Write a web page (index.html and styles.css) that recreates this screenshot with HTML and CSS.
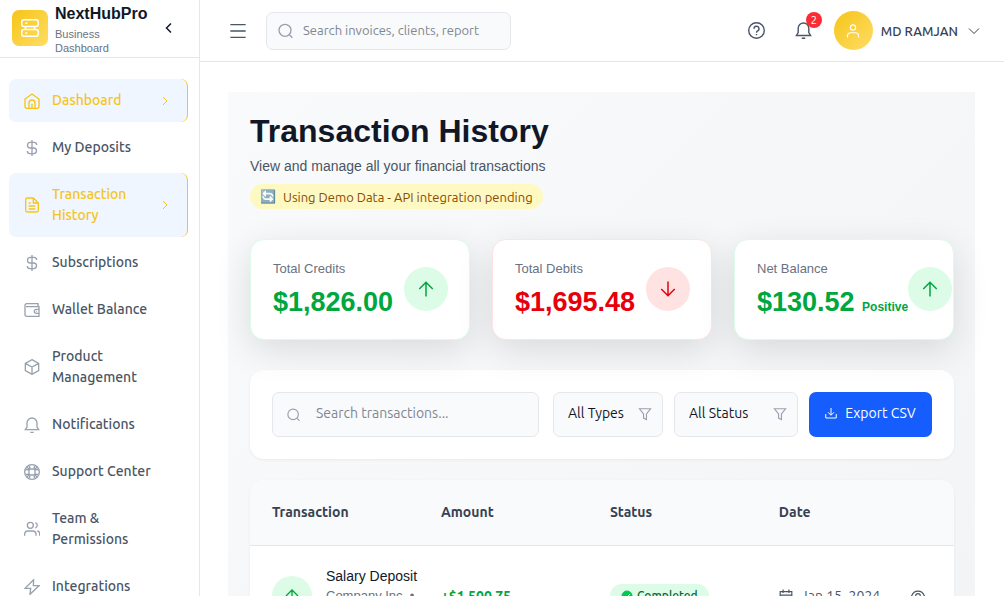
FILE: index.html
```html
<!DOCTYPE html>
<html lang="en">

<head>
    <meta charset="UTF-8">
    <meta name="viewport" content="width=device-width, initial-scale=1.0">
    <title>NextHubPro - Transaction History</title>
    <link rel="stylesheet" href="styles.css">
</head>

<body>
    <!-- Icon sprite -->
    <svg class="sprite" aria-hidden="true">
        <symbol id="i-server" viewBox="0 0 24 24"><rect x="1" y="1" width="22" height="9" rx="3"/><rect x="1" y="14" width="22" height="9" rx="3"/><path d="M5.500 5.500h3M5.500 18.500h3M18 10v4M6 10v4"/></symbol>
        <symbol id="i-left" viewBox="0 0 24 24"><path d="M16 3l-9 9 9 9"/></symbol>
        <symbol id="i-right" viewBox="0 0 24 24"><path d="M8 4l8 8-8 8"/></symbol>
        <symbol id="i-down" viewBox="0 0 24 24"><path d="M2 7l10 10L22 7"/></symbol>
        <symbol id="i-home" viewBox="0 0 24 24"><path d="M1.500 9L12 1.500 22.500 9v11a3 3 0 0 1-3 3h-15a3 3 0 0 1-3-3z"/><path d="M7.500 23v-8a4.500 4.500 0 0 1 9 0v8M12 16v7"/></symbol>
        <symbol id="i-dollar" viewBox="0 0 24 24"><path d="M12 0v24M19 7.500a4 4 0 0 0-4-4H9.500a4.200 4.200 0 0 0 0 8.500h5a4.200 4.200 0 0 1 0 8.500H9a4 4 0 0 1-4-4"/></symbol>
        <symbol id="i-file" viewBox="0 0 24 24"><path d="M14 1.500H5a2.500 2.500 0 0 0-2.500 2.500v16A2.500 2.500 0 0 0 5 22.500h14a2.500 2.500 0 0 0 2.500-2.500V9zM14 1.500V9h7.500M7 9h3M7 13.500h10M7 18h10"/></symbol>
        <symbol id="i-wallet" viewBox="0 0 24 24"><path d="M21 7V2.500H4A2.500 2.500 0 0 0 1.500 5v14A2.500 2.500 0 0 0 4 21.500h18.500V7H3M22.500 11h-4a3 3 0 0 0 0 6h4M18 14h1"/></symbol>
        <symbol id="i-box" viewBox="0 0 24 24"><path d="M12 1l10 5.500v11L12 23 2 17.500v-11zM2 6.500L12 12l10-5.500M12 12v11"/></symbol>
        <symbol id="i-bell" viewBox="0 0 24 24"><path d="M2 19h20l-2.500-4V9a7.500 7.500 0 0 0-15 0v6zM9.500 23h5"/></symbol>
        <symbol id="i-support" viewBox="0 0 24 24"><circle cx="12" cy="12" r="11"/><rect x="7.500" y="7.500" width="9" height="9" rx="2.500"/><path d="M4 4l4.200 4.200M20 4l-4.200 4.200M4 20l4.200-4.200M20 20l-4.200-4.200M8 2.500L9 7M16 2.500L15 7M8 21.500l1-4.500M16 21.500L15 17M2.500 8L7 9M2.500 16L7 15M21.500 8L17 9M21.500 16L17 15"/></symbol>
        <symbol id="i-team" viewBox="0 0 24 24"><circle cx="9.500" cy="6.500" r="4.500"/><path d="M1 22v-2a5 5 0 0 1 5-5h7a5 5 0 0 1 5 5v2M17 2.300a4.500 4.500 0 0 1 0 8.400M20 15a4 4 0 0 1 3.500 4v3"/></symbol>
        <symbol id="i-bolt" viewBox="0 0 24 24"><path d="M14.500 1L1.500 14H10l-1 9L22.500 10H14z"/></symbol>
        <symbol id="i-menu" viewBox="0 0 24 24"><path d="M0.500 2.500h23M0.500 12h23M0.500 21.500h23"/></symbol>
        <symbol id="i-search" viewBox="0 0 24 24"><circle cx="10.500" cy="11" r="9"/><path d="M17 17.500L21.500 22"/></symbol>
        <symbol id="i-help" viewBox="0 0 24 24"><circle cx="12" cy="12" r="11"/><path d="M8.500 9.500a3.500 3.500 0 1 1 5 3.100c-1 .5-1.500 1-1.500 2.400M12 16.800v2"/></symbol>
        <symbol id="i-user" viewBox="0 0 24 24"><circle cx="12" cy="6" r="4.500"/><path d="M2.500 23v-2.500A5.500 5.500 0 0 1 8 15h8a5.500 5.500 0 0 1 5.500 5.500V23"/></symbol>
        <symbol id="i-up" viewBox="0 0 24 24"><path d="M12 22V3M3 12l9-9 9 9"/></symbol>
        <symbol id="i-arrow-down" viewBox="0 0 24 24"><path d="M12 2v19M3 12l9 9 9-9"/></symbol>
        <symbol id="i-filter" viewBox="0 0 24 24"><path d="M2.500 3h19L14.500 12v9.500l-5-2.500v-7z"/></symbol>
        <symbol id="i-download" viewBox="0 0 24 24"><path d="M12 2v14M6 10.500l6 6 6-6M1.500 14v8h21v-8"/></symbol>
        <symbol id="i-calendar" viewBox="0 0 24 24"><path d="M2 4.500h20V22H2zM2 10.500h20M7 1v6M17 1v6M6 15h3M15 15h3"/></symbol>
        <symbol id="i-eye" viewBox="0 0 24 24"><path d="M1 12C3 6.500 7 3.500 12 3.500S21 6.500 23 12c-2 5.500-6 8.500-11 8.500S3 17.500 1 12z"/><circle cx="12" cy="12" r="4"/></symbol>
        <symbol id="i-check" viewBox="0 0 24 24"><circle cx="12" cy="12" r="10" fill="currentColor"/><path class="tick" d="M7 12l4 4 7-8"/></symbol>
    </svg>

    <div class="app">
        <aside class="sidebar">
            <div class="brand">
                <span class="brand-logo"><svg class="icon icon-lg"><use href="#i-server"/></svg></span>
                <div class="brand-text">
                    <strong>NextHubPro</strong>
                    <span>Business Dashboard</span>
                </div>
                <button type="button" class="icon-btn collapse" aria-label="Collapse sidebar"><svg class="icon icon-xs bold"><use href="#i-left"/></svg></button>
            </div>

            <nav class="nav">
                <a href="#" class="nav-item active"><svg class="icon"><use href="#i-home"/></svg><span>Dashboard</span><svg class="icon icon-xs chevron"><use href="#i-right"/></svg></a>
                <a href="#" class="nav-item"><svg class="icon"><use href="#i-dollar"/></svg><span>My Deposits</span></a>
                <a href="#" class="nav-item active"><svg class="icon"><use href="#i-file"/></svg><span>Transaction History</span><svg class="icon icon-xs chevron"><use href="#i-right"/></svg></a>
                <a href="#" class="nav-item"><svg class="icon"><use href="#i-dollar"/></svg><span>Subscriptions</span></a>
                <a href="#" class="nav-item"><svg class="icon"><use href="#i-wallet"/></svg><span>Wallet Balance</span></a>
                <a href="#" class="nav-item"><svg class="icon"><use href="#i-box"/></svg><span>Product Management</span></a>
                <a href="#" class="nav-item"><svg class="icon"><use href="#i-bell"/></svg><span>Notifications</span></a>
                <a href="#" class="nav-item"><svg class="icon"><use href="#i-support"/></svg><span>Support Center</span></a>
                <a href="#" class="nav-item"><svg class="icon"><use href="#i-team"/></svg><span>Team &amp; Permissions</span></a>
                <a href="#" class="nav-item"><svg class="icon"><use href="#i-bolt"/></svg><span>Integrations</span></a>
            </nav>
        </aside>

        <div class="main">
            <header class="topbar">
                <button type="button" class="icon-btn" aria-label="Toggle menu"><svg class="icon"><use href="#i-menu"/></svg></button>
                <div class="search">
                    <svg class="icon"><use href="#i-search"/></svg>
                    <input type="text" aria-label="Search" placeholder="Search invoices, clients, report">
                </div>
                <div class="topbar-right">
                    <button type="button" class="icon-btn" aria-label="Help"><svg class="icon icon-md"><use href="#i-help"/></svg></button>
                    <button type="button" class="icon-btn bell" aria-label="Notifications"><svg class="icon icon-md"><use href="#i-bell"/></svg><span class="count">2</span></button>
                    <button type="button" class="user">
                        <span class="avatar"><svg class="icon icon-sm"><use href="#i-user"/></svg></span>
                        <span>MD RAMJAN</span>
                        <svg class="icon icon-xs user-chevron"><use href="#i-down"/></svg>
                    </button>
                </div>
            </header>

            <main class="content">
                <div class="panel">
                    <h1>Transaction History</h1>
                    <p class="subtitle">View and manage all your financial transactions</p>
                    <div class="notice"><span>🔄</span><span>Using Demo Data - API integration pending</span></div>

                    <section class="stats">
                        <div class="stat stat-green">
                            <div class="stat-text">
                                <p class="stat-label">Total Credits</p>
                                <p class="stat-value">$1,826.00</p>
                            </div>
                            <span class="stat-icon"><svg class="icon icon-lg"><use href="#i-up"/></svg></span>
                        </div>
                        <div class="stat stat-red">
                            <div class="stat-text">
                                <p class="stat-label">Total Debits</p>
                                <p class="stat-value">$1,695.48</p>
                            </div>
                            <span class="stat-icon"><svg class="icon icon-lg"><use href="#i-arrow-down"/></svg></span>
                        </div>
                        <div class="stat stat-green">
                            <div class="stat-text">
                                <p class="stat-label">Net Balance</p>
                                <p class="stat-value">$130.52 <small>Positive</small></p>
                            </div>
                            <span class="stat-icon"><svg class="icon icon-lg"><use href="#i-up"/></svg></span>
                        </div>
                    </section>

                    <form class="filters">
                        <div class="filter-search">
                            <svg class="icon icon-sm"><use href="#i-search"/></svg>
                            <input type="text" aria-label="Search transactions" placeholder="Search transactions...">
                        </div>
                        <div class="select select-type">
                            <select aria-label="Type">
                                <option>All Types</option>
                                <option>Credit</option>
                                <option>Debit</option>
                            </select>
                            <svg class="icon icon-sm"><use href="#i-filter"/></svg>
                        </div>
                        <div class="select select-status">
                            <select aria-label="Status">
                                <option>All Status</option>
                                <option>Completed</option>
                                <option>Pending</option>
                            </select>
                            <svg class="icon icon-sm"><use href="#i-filter"/></svg>
                        </div>
                        <button type="button" class="btn"><svg class="icon icon-xs"><use href="#i-download"/></svg>Export CSV</button>
                    </form>

                    <table class="transactions">
                        <thead>
                            <tr>
                                <th>Transaction</th>
                                <th>Amount</th>
                                <th>Status</th>
                                <th class="col-date">Date</th>
                            </tr>
                        </thead>
                        <tbody>
                            <tr>
                                <td>
                                    <div class="cell">
                                        <span class="tx-icon"><svg class="icon"><use href="#i-up"/></svg></span>
                                        <div class="tx-text">
                                            <p class="tx-name">Salary Deposit</p>
                                            <p class="tx-meta">Company Inc. • Salary</p>
                                        </div>
                                    </div>
                                </td>
                                <td class="amount">+$1,500.75</td>
                                <td><span class="badge"><svg class="icon icon-xs"><use href="#i-check"/></svg>Completed</span></td>
                                <td>
                                    <div class="cell date">
                                        <svg class="icon icon-sm"><use href="#i-calendar"/></svg>
                                        <span>Jan 15, 2024</span>
                                        <button type="button" class="icon-btn view" aria-label="View transaction"><svg class="icon icon-sm"><use href="#i-eye"/></svg></button>
                                    </div>
                                </td>
                            </tr>
                        </tbody>
                    </table>
                </div>
            </main>
        </div>
    </div>
</body>

</html>
```
FILE: styles.css
```css
* {
    margin: 0;
    padding: 0;
    box-sizing: border-box;
}

body {
    font-family: Ubuntu, "Noto Sans", sans-serif;
    font-size: 14px;
    color: #101828;
    background: white;
}

button,
input,
select {
    font: inherit;
    color: inherit;
}

button {
    border: none;
    background: none;
    cursor: pointer;
}

a {
    color: inherit;
    text-decoration: none;
}

.sprite {
    display: none;
}

/* Icons */
.icon {
    width: 16px;
    height: 16px;
    flex-shrink: 0;
    display: block;
    overflow: visible;
    fill: none;
    stroke: currentColor;
    stroke-width: 2;
}

.icon-xs {
    width: 12px;
    height: 12px;
}

.icon-sm {
    width: 14px;
    height: 14px;
}

.icon-md {
    width: 17px;
    height: 17px;
}

.icon-lg {
    width: 18px;
    height: 18px;
}

.bold {
    stroke-width: 3;
}

.icon-btn {
    display: flex;
    color: #4a5565;
}

.tick {
    stroke: white;
}

/* Layout */
.app {
    display: flex;
    height: 100vh;
    overflow: hidden;
}

.sidebar {
    width: 200px;
    flex-shrink: 0;
    border-right: 1px solid #e5e7eb;
    overflow: hidden;
}

.main {
    flex: 1;
    min-width: 0;
    display: flex;
    flex-direction: column;
}

/* Sidebar */
.brand {
    display: flex;
    align-items: center;
    gap: 7px;
    height: 58px;
    padding: 0 24px 2px 12px;
    border-bottom: 1px solid #e5e7eb;
    font-family: "Liberation Sans", Arial, sans-serif;
}

.brand-logo {
    display: grid;
    place-items: center;
    width: 36px;
    height: 36px;
    flex-shrink: 0;
    border-radius: 7px;
    color: white;
    background: linear-gradient(135deg, #f5c518, #ffdd66);
}

.brand-text strong {
    display: block;
    font-size: 16px;
    line-height: 26px;
}

.brand-text span {
    display: block;
    width: 70px;
    font-size: 11px;
    line-height: 14px;
    color: #6a7282;
}

.collapse {
    margin-left: auto;
    color: #101828;
}

.nav {
    display: flex;
    flex-direction: column;
    gap: 4px;
    padding: 21px 11px 21px 9px;
}

.nav-item {
    display: flex;
    align-items: center;
    gap: 12px;
    padding: 11px 15px;
    border-radius: 7px;
    font-weight: 500;
    line-height: 21px;
    color: #4a5565;
}

.nav-item .icon {
    color: #99a1af;
}

.nav-item.active {
    padding-right: 16px;
    border-right: 1px solid #f5c518;
    background: #eff6ff;
    color: #f5c518;
}

.nav-item.active .icon {
    color: #f5c518;
}

.nav-item .chevron {
    margin-left: auto;
}

/* Topbar */
.topbar {
    display: flex;
    align-items: center;
    gap: 20px;
    height: 62px;
    flex-shrink: 0;
    padding: 0 24px 0 30px;
    border-bottom: 1px solid #e5e7eb;
}

.search {
    display: flex;
    align-items: center;
    gap: 9px;
    width: 245px;
    height: 38px;
    padding: 0 11px;
    border: 1px solid #e5e7eb;
    border-radius: 7px;
    background: #f9fafb;
    color: #99a1af;
}

.search input {
    width: 100%;
    padding-bottom: 2px;
    border: none;
    outline: none;
    background: none;
    font-size: 13px;
}

input::placeholder {
    color: #808793;
    opacity: 1;
}

.topbar-right {
    display: flex;
    align-items: center;
    gap: 30px;
    margin-left: auto;
}

.bell {
    position: relative;
}

.count {
    position: absolute;
    top: -10px;
    right: -10px;
    width: 16px;
    height: 16px;
    border-radius: 50%;
    background: #fb2c36;
    color: white;
    font-size: 11px;
    line-height: 16px;
    text-align: center;
}

.user {
    display: flex;
    align-items: center;
    gap: 8px;
    margin-left: -8px;
    font-size: 13px;
    font-weight: 500;
    color: #364153;
}

.avatar {
    display: grid;
    place-items: center;
    width: 39px;
    height: 39px;
    border-radius: 50%;
    color: white;
    background: linear-gradient(135deg, #f5c518, #ffdd66);
}

.user-chevron {
    margin-left: 2px;
}

/* Content */
.content {
    flex: 1;
    min-height: 0;
    overflow: auto;
    scrollbar-width: none;
    padding: 30px 29px 30px 28px;
}

.panel {
    padding: 22px 21px 22px 22px;
    background: linear-gradient(135deg, #f9fafb, #f3f4f6);
}

h1 {
    font-family: "Liberation Sans", Arial, sans-serif;
    font-size: 32px;
    line-height: 34px;
}

.subtitle {
    margin-top: 7px;
    font-family: "Liberation Sans", Arial, sans-serif;
    font-size: 14px;
    line-height: 22px;
    color: #4a5565;
}

.notice {
    display: flex;
    align-items: center;
    gap: 7px;
    width: fit-content;
    height: 25px;
    margin-top: 7px;
    padding: 0 10px;
    border-radius: 13px;
    background: #fef9c2;
    color: #894b00;
    font-size: 13px;
}

/* Stat cards */
.stats {
    display: grid;
    grid-template-columns: repeat(3, minmax(0, 1fr));
    gap: 22px;
    margin-top: 30px;
}

.stat {
    display: flex;
    align-items: center;
    justify-content: space-between;
    height: 101px;
    padding: 0 21px 2px 22px;
    border: 1px solid #dcfce7;
    border-radius: 14px;
    background: white;
    box-shadow: 0 10px 36px rgba(0, 0, 0, 0.12);
    font-family: "Liberation Sans", Arial, sans-serif;
    color: #00a63e;
}

.stat-red {
    border-color: #ffe2e2;
    color: #e7000b;
}

.stat-text {
    white-space: nowrap;
}

.stat-label {
    font-size: 13px;
    line-height: 18px;
    color: #6a7282;
}

.stat-value {
    margin-top: 8px;
    font-size: 27px;
    font-weight: bold;
    line-height: 32px;
}

.stat-value small {
    font-size: 12px;
    line-height: 1;
}

.stat-icon {
    display: grid;
    place-items: center;
    width: 44px;
    height: 44px;
    flex-shrink: 0;
    border-radius: 50%;
    background: #dcfce7;
}

.stat-red .stat-icon {
    background: #ffe2e2;
}

/* Filters */
.filters {
    display: flex;
    gap: 11px;
    margin-top: 30px;
    padding: 22px;
    border-radius: 14px;
    background: white;
    box-shadow: 0 1px 3px rgba(0, 0, 0, 0.06);
}

.filter-search {
    display: flex;
    align-items: center;
    gap: 15px;
    flex: 1;
    min-width: 0;
    height: 45px;
    margin-right: 3px;
    padding: 0 14px;
    border: 1px solid #e5e7eb;
    border-radius: 7px;
    background: #f9fafb;
    color: #99a1af;
}

.filter-search input {
    width: 100%;
    min-width: 0;
    padding-bottom: 3px;
    border: none;
    outline: none;
    background: none;
}

.select {
    position: relative;
}

.select-type {
    width: 110px;
}

.select-status {
    width: 124px;
}

.select select {
    appearance: none;
    width: 100%;
    height: 45px;
    padding: 0 30px 3px 14px;
    border: 1px solid #e5e7eb;
    border-radius: 7px;
    background: #f9fafb;
}

.select .icon {
    position: absolute;
    right: 11px;
    top: 15px;
    color: #99a1af;
    pointer-events: none;
}

.btn {
    display: flex;
    align-items: center;
    justify-content: center;
    gap: 8px;
    width: 123px;
    height: 45px;
    padding-bottom: 3px;
    border-radius: 7px;
    background: #155dfc;
    color: white;
    white-space: nowrap;
}

/* Table */
.transactions {
    width: 100%;
    margin-top: 21px;
    table-layout: fixed;
    border-spacing: 0;
    border-radius: 14px;
    background: white;
    box-shadow: 0 1px 3px rgba(0, 0, 0, 0.06);
}

.transactions th {
    width: 24%;
    height: 66px;
    padding: 0 0 2px 22px;
    border-bottom: 1px solid #e5e7eb;
    background: #f9fafb;
    color: #364153;
    font-weight: 600;
    text-align: left;
}

.transactions th:first-child {
    border-top-left-radius: 14px;
}

.transactions th.col-date {
    width: 28%;
    border-top-right-radius: 14px;
}

.transactions td {
    padding: 21px 0 22px 22px;
}

.cell {
    display: flex;
    align-items: center;
    gap: 14px;
}

.tx-icon {
    display: grid;
    place-items: center;
    width: 40px;
    height: 40px;
    flex-shrink: 0;
    border-radius: 50%;
    background: #dcfce7;
    color: #00a63e;
}

.tx-text {
    font-family: "Liberation Sans", Arial, sans-serif;
    line-height: 19px;
}

.tx-name {
    white-space: nowrap;
}

.tx-meta {
    width: 92px;
    font-size: 13px;
    color: #6a7282;
}

.amount {
    color: #00a63e;
    font-weight: 600;
}

.badge {
    display: inline-flex;
    align-items: center;
    gap: 4px;
    height: 24px;
    padding: 0 11px;
    border-radius: 12px;
    background: #dcfce7;
    color: #016630;
    font-size: 12px;
    font-weight: 500;
}

.badge .icon {
    color: #00c950;
}

.date {
    gap: 8px;
    padding-right: 29px;
    color: #4a5565;
}

.view {
    margin-left: auto;
}
```
